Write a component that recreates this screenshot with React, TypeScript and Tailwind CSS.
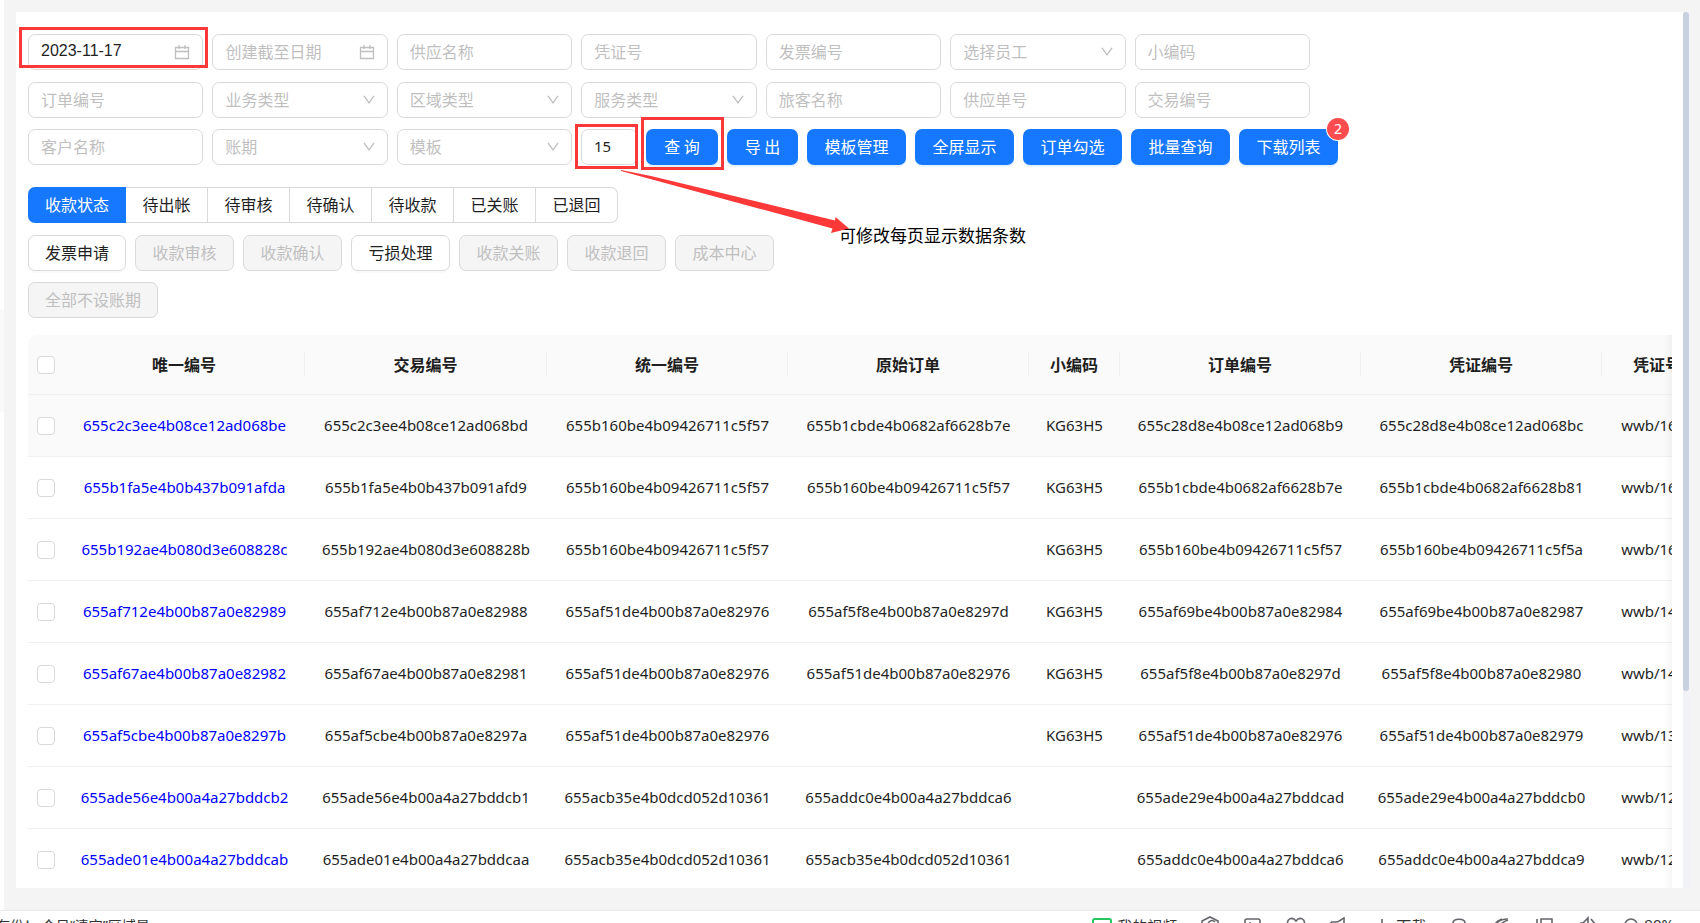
import React from 'react';

const latin = "font-['Noto_Sans','Noto_Sans_CJK_SC',sans-serif]";
const cjk = "font-['Noto_Sans_CJK_SC',sans-serif]";
const fieldBox =
  'h-9 w-full min-w-0 appearance-none rounded-[7px] border border-[#d9d9d9] bg-white px-3 pb-[2px] text-base text-[#1f1f1f] outline-none placeholder:text-[#bfbfbf] placeholder:opacity-100';

type FieldKind = 'text' | 'select' | 'date';

interface FieldProps {
  label: string;
  kind?: FieldKind;
  value?: string;
  marked?: boolean;
}

function Calendar() {
  return (
    <svg viewBox="0 0 16 16" className="pointer-events-none absolute right-[13px] top-[10px] size-4" fill="none" stroke="#bfbfbf">
      <path d="M1.5 3.5h13v11h-13zM1.5 7.5h13M5 1v4M11 1v4" strokeWidth="1.3" />
    </svg>
  );
}

function Chevron() {
  return (
    <svg viewBox="0 0 12 9" className="pointer-events-none absolute right-[13px] top-[13px] h-[9px] w-3" fill="none" stroke="#bfbfbf">
      <path d="M1 .8 6 7.8 11 .8" strokeWidth="1.3" />
    </svg>
  );
}

function Field({ label, kind = 'text', value, marked }: FieldProps) {
  return (
    <div className="relative min-w-0">
      {kind === 'select' ? (
        <select aria-label={label} defaultValue="" className={`${fieldBox} text-[#bfbfbf]!`}>
          <option value="">{label}</option>
        </select>
      ) : (
        <input
          aria-label={label}
          placeholder={label}
          defaultValue={value}
          className={`${fieldBox} ${value ? "font-['Liberation_Sans',sans-serif]" : ''}`}
        />
      )}
      {kind === 'select' && <Chevron />}
      {kind === 'date' && <Calendar />}
      {marked && (
        <span className="pointer-events-none absolute -left-[9px] -top-[7px] z-10 h-[41px] w-[189px] border-3 border-[#fc3938]" />
      )}
    </div>
  );
}

const filters: FieldProps[] = [
  { label: '创建开始日期', kind: 'date', value: '2023-11-17', marked: true },
  { label: '创建截至日期', kind: 'date' },
  { label: '供应名称' },
  { label: '凭证号' },
  { label: '发票编号' },
  { label: '选择员工', kind: 'select' },
  { label: '小编码' },
  { label: '订单编号' },
  { label: '业务类型', kind: 'select' },
  { label: '区域类型', kind: 'select' },
  { label: '服务类型', kind: 'select' },
  { label: '旅客名称' },
  { label: '供应单号' },
  { label: '交易编号' },
];

const lastFilters: FieldProps[] = [
  { label: '客户名称' },
  { label: '账期', kind: 'select' },
  { label: '模板', kind: 'select' },
];

const primary =
  'h-9 rounded-[7px] bg-[#1677ff] pb-[2px] text-base text-white shadow-[0_2px_0_rgba(5,145,255,0.1)]';
const tabs = ['待出帐', '待审核', '待确认', '待收款', '已关账', '已退回'];
const actions = [
  { label: '发票申请', on: true },
  { label: '收款审核', on: false },
  { label: '收款确认', on: false },
  { label: '亏损处理', on: true },
  { label: '收款关账', on: false },
  { label: '收款退回', on: false },
  { label: '成本中心', on: false },
];

const headers = ['唯一编号', '交易编号', '统一编号', '原始订单', '小编码', '订单编号', '凭证编号', '凭证号'];
const rows: string[][] = [
  ['655c2c3ee4b08ce12ad068be', '655c2c3ee4b08ce12ad068bd', '655b160be4b09426711c5f57', '655b1cbde4b0682af6628b7e', 'KG63H5', '655c28d8e4b08ce12ad068b9', '655c28d8e4b08ce12ad068bc', 'wwb/1605'],
  ['655b1fa5e4b0b437b091afda', '655b1fa5e4b0b437b091afd9', '655b160be4b09426711c5f57', '655b160be4b09426711c5f57', 'KG63H5', '655b1cbde4b0682af6628b7e', '655b1cbde4b0682af6628b81', 'wwb/1604'],
  ['655b192ae4b080d3e608828c', '655b192ae4b080d3e608828b', '655b160be4b09426711c5f57', '', 'KG63H5', '655b160be4b09426711c5f57', '655b160be4b09426711c5f5a', 'wwb/1603'],
  ['655af712e4b00b87a0e82989', '655af712e4b00b87a0e82988', '655af51de4b00b87a0e82976', '655af5f8e4b00b87a0e8297d', 'KG63H5', '655af69be4b00b87a0e82984', '655af69be4b00b87a0e82987', 'wwb/1402'],
  ['655af67ae4b00b87a0e82982', '655af67ae4b00b87a0e82981', '655af51de4b00b87a0e82976', '655af51de4b00b87a0e82976', 'KG63H5', '655af5f8e4b00b87a0e8297d', '655af5f8e4b00b87a0e82980', 'wwb/1401'],
  ['655af5cbe4b00b87a0e8297b', '655af5cbe4b00b87a0e8297a', '655af51de4b00b87a0e82976', '', 'KG63H5', '655af51de4b00b87a0e82976', '655af51de4b00b87a0e82979', 'wwb/1302'],
  ['655ade56e4b00a4a27bddcb2', '655ade56e4b00a4a27bddcb1', '655acb35e4b0dcd052d10361', '655addc0e4b00a4a27bddca6', '', '655ade29e4b00a4a27bddcad', '655ade29e4b00a4a27bddcb0', 'wwb/1202'],
  ['655ade01e4b00a4a27bddcab', '655ade01e4b00a4a27bddcaa', '655acb35e4b0dcd052d10361', '655acb35e4b0dcd052d10361', '', '655addc0e4b00a4a27bddca6', '655addc0e4b00a4a27bddca9', 'wwb/1201'],
];

function Check({ label }: { label: string }) {
  return (
    <input
      type="checkbox"
      aria-label={label}
      className="ml-[9px] block size-[18px] appearance-none rounded-[4px] border border-[#d9d9d9] bg-white"
    />
  );
}

function Filters() {
  return (
    <>
      <div className="grid max-w-[1282px] grid-cols-7 gap-x-[9px] gap-y-3">
        {filters.map((f) => (
          <Field key={f.label} {...f} />
        ))}
      </div>
      <div className="mt-[11px] flex gap-[9px]">
        <div className="grid w-[544px] grid-cols-3 gap-[9px]">
          {lastFilters.map((f) => (
            <Field key={f.label} {...f} />
          ))}
        </div>
        <div className="relative w-14">
          <input aria-label="每页条数" defaultValue="15" className={`${fieldBox} ${latin} text-[15px]!`} />
          <span className="pointer-events-none absolute -left-[6px] -top-[5px] z-10 h-[45px] w-[63px] border-3 border-[#fc3938]" />
          <svg
            viewBox="0 0 230 66"
            className="pointer-events-none absolute left-10 top-[41px] z-10 h-[66px] w-[230px]"
            fill="#fc3938"
          >
            <path d="M0 0 30 6 214 50.5 214.5 47 228 58.5 210 63 211.5 58.5 0 1Z" />
          </svg>
          <p className="absolute left-[258px] top-[94px] whitespace-nowrap text-[17px] leading-6 text-black">
            可修改每页显示数据条数
          </p>
        </div>
        <div className="relative">
          <button className={`${primary} w-[72px]`}>查 询</button>
          <span className="pointer-events-none absolute -left-[5px] -top-3 z-10 h-[53px] w-[83px] border-3 border-[#fc3938]" />
        </div>
        <button className={`${primary} w-[71px]`}>导 出</button>
        {['模板管理', '全屏显示', '订单勾选', '批量查询'].map((t) => (
          <button key={t} className={`${primary} w-[99px]`}>
            {t}
          </button>
        ))}
        <div className="relative">
          <button className={`${primary} w-[99px]`}>下载列表</button>
          <span
            className={`${latin} absolute -right-[11px] -top-[11px] flex size-[22px] items-center justify-center rounded-full bg-[#ff4d4f] text-sm text-white ring-1 ring-white`}
          >
            2
          </span>
        </div>
      </div>
    </>
  );
}

function Actions() {
  return (
    <>
      <div className="mt-[22px] flex">
        <button className="h-9 w-[98px] rounded-l-[7px] bg-[#1677ff] pb-[2px] text-base text-white">收款状态</button>
        {tabs.map((t) => (
          <button
            key={t}
            className="h-9 w-[82px] border-y border-r border-[#d9d9d9] bg-white pb-[2px] text-base text-[#1f1f1f] last:rounded-r-[7px]"
          >
            {t}
          </button>
        ))}
      </div>
      <div className="mt-3 flex max-w-[760px] flex-wrap gap-x-[9px] gap-y-[11px]">
        {actions.map((a) => (
          <button
            key={a.label}
            disabled={!a.on}
            className="h-9 w-[99px] rounded-[7px] border border-[#d9d9d9] bg-white pb-[2px] text-base text-[#1f1f1f] shadow-[0_2px_0_rgba(0,0,0,0.02)] first:w-[98px] disabled:bg-[#f5f5f5] disabled:text-[#bfbfbf] disabled:shadow-none"
          >
            {a.label}
          </button>
        ))}
        <button
          disabled
          className="h-9 w-[130px] rounded-[7px] border border-[#d9d9d9] bg-[#f5f5f5] pb-[2px] text-base text-[#bfbfbf]"
        >
          全部不设账期
        </button>
      </div>
    </>
  );
}

function OrdersTable() {
  return (
    <div className="relative mt-[17px] overflow-hidden">
      <table className="w-[1685px] table-fixed border-separate border-spacing-0 text-center text-[#1f1f1f]">
        <colgroup>
          <col className="w-9" />
          <col className="w-[241px]" />
          <col className="w-[242px]" />
          <col className="w-[241px]" />
          <col className="w-[241px]" />
          <col className="w-[91px]" />
          <col className="w-[241px]" />
          <col className="w-[241px]" />
          <col />
        </colgroup>
        <thead>
          <tr className="h-[60px]">
            <th className="rounded-tl-[9px] border-b border-[#f0f0f0] bg-[#fafafa] p-0">
              <Check label="全选" />
            </th>
            {headers.map((h) => (
              <th key={h} className="border-b border-[#f0f0f0] bg-[#fafafa] p-0 text-base font-bold">
                <div className="flex h-[25px] items-center justify-center border-r border-[#f0f0f0] pb-[2px]">{h}</div>
              </th>
            ))}
          </tr>
        </thead>
        <tbody className={`${latin} text-[15px]`}>
          {rows.map((row, r) => (
            <tr key={row[0]} className={r === 0 ? 'h-[62px] bg-[#fafafa]' : 'h-[62px]'}>
              <td className="border-b border-[#f0f0f0] p-0">
                <Check label={row[0]} />
              </td>
              {row.map((cell, c) => (
                <td key={c} className="border-b border-[#f0f0f0] p-0">
                  {c === 0 ? (
                    <a href={`#${cell}`} className="text-[#0000ff]">
                      {cell}
                    </a>
                  ) : (
                    cell
                  )}
                </td>
              ))}
            </tr>
          ))}
        </tbody>
      </table>
      <div className="pointer-events-none absolute inset-y-0 right-0 w-8 shadow-[inset_-11px_0_9px_-9px_rgba(5,5,5,0.06)]" />
    </div>
  );
}

const trayIcons = [
  'M2 5 10 1 18 5v9H2zM8 9a4 4 0 0 1 7-3',
  'M2 5a2 2 0 0 1 2-2h11a2 2 0 0 1 2 2v11H2zM6 7h2',
  'M10 16 2 9C0 3 6 0 10 5c4-5 10-2 8 4z',
  'M2 6h5c4 0 5-3 8-4v13M2 6v5',
];
const tailIcons = [
  'M4 12V7c0-5 12-5 12 0v5z',
  'M3 14C3 6 8 3 16 3M7 14c0-5 3-8 9-10M3 8c2-3 4-4 7-5',
  'M2 3v12M6 15V3h11v13',
  'M2 7h3l5-5v13M13 3l4 5',
];

function TrayIcon({ d }: { d: string }) {
  return (
    <svg viewBox="0 0 20 20" className="size-5 shrink-0" fill="none" stroke="#63656a" strokeWidth="1.6">
      <path d={d} />
    </svg>
  );
}

function StatusBar() {
  return (
    <footer className="flex h-[13px] shrink-0 items-start justify-between overflow-hidden border-t border-[#e8e8e8] bg-white pr-[26px] text-[15px] text-[#333]">
      <span className={`${latin} -ml-1 whitespace-nowrap pt-[5px] text-sm leading-5`}>在份！ 今日“清空”区域显</span>
      <div className="flex items-start gap-[23px] pt-[5px] leading-5">
        <span className="flex items-start gap-[5px]">
          <svg viewBox="0 0 20 20" className="size-5" fill="none" stroke="#22c55e" strokeWidth="2">
            <rect x="1" y="3" width="18" height="16" rx="2" />
          </svg>
          我的视频
        </span>
        {trayIcons.map((d) => (
          <TrayIcon key={d} d={d} />
        ))}
        <span className="flex items-start gap-1">
          <TrayIcon d="M10 3v14M5 12l5 5 5-5" />
          下载
        </span>
        {tailIcons.map((d) => (
          <TrayIcon key={d} d={d} />
        ))}
        <span className={`${latin} flex items-start gap-[3px] leading-4`}>
          <TrayIcon d="M10 3a6 6 0 1 1 0 12a6 6 0 1 1 0-12M14 14l4 4" />
          90%
        </span>
      </div>
    </footer>
  );
}

export default function App() {
  return (
    <div className={`${cjk} flex h-screen flex-col overflow-hidden bg-[#f4f4f4]`}>
      <main className="flex min-h-0 flex-1">
        <div className="w-1 bg-white pt-[309px]">
          <div className="h-[103px] bg-[#fafafa]" />
        </div>
        <div className="flex min-w-0 flex-1 pb-[22px] pl-3 pr-[11px] pt-3">
          <section className="min-w-0 flex-1 overflow-hidden bg-white pl-3 pr-[11px] pt-[22px]">
            <Filters />
            <Actions />
            <OrdersTable />
          </section>
          <div className="w-[6px] bg-[#f1f2f7]">
            <div className="h-[77.5%] rounded-[3px] bg-[#c8d1e0]" />
          </div>
        </div>
      </main>
      <StatusBar />
    </div>
  );
}
